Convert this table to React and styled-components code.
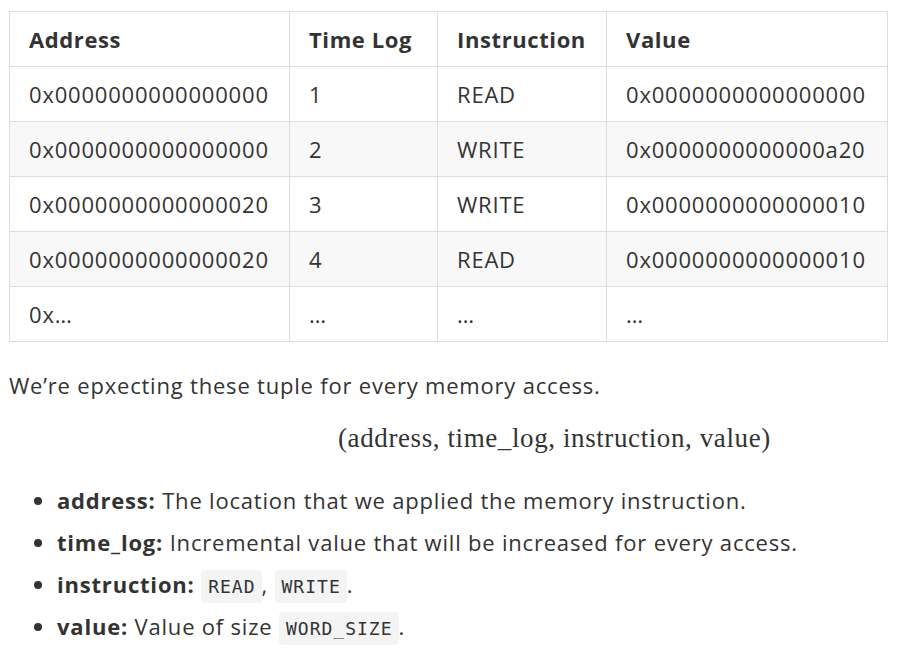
import React from "react";
import styled, { createGlobalStyle } from "styled-components";

const GlobalStyle = createGlobalStyle`
  body {
    margin: 0;
    background: #fff;
    color: #333;
    font-family: "Open Sans", "Noto Sans", sans-serif;
  }
`;

const Page = styled.div`
  padding: 11px 10px 0 9px;
  font-size: 22px;
  letter-spacing: 0.8px;
`;

const Table = styled.table`
  border-collapse: collapse;
  table-layout: fixed;
  width: 878px;
  font-size: 22px;
  letter-spacing: 0.8px;
  th, td {
    border: 1px solid #ddd;
    padding: 0 19px;
    height: 54px;
    text-align: left;
    white-space: nowrap;
  }
  th {
    font-weight: 700;
    letter-spacing: 0.6px;
  }
  tbody tr:nth-child(odd) {
    background: #fff;
  }
  tbody tr:nth-child(even) {
    background: #f8f8f8;
  }
`;

const Para = styled.p`
  margin: 28px 0 0;
  line-height: 30px;
`;

const MathLine = styled.div`
  margin-top: 23px;
  padding-left: 329px;
  font-family: "Liberation Serif", "DejaVu Serif", serif;
  font-size: 27px;
  letter-spacing: 0.6px;
  line-height: 30px;
`;

const List = styled.ul`
  margin: 32px 0 0;
  padding-left: 48px;
  li {
    line-height: 30px;
    height: 30px;
    margin-bottom: 12px;
  }
`;

const Code = styled.code`
  font-family: "DejaVu Sans Mono", "Liberation Mono", monospace;
  font-size: 18px;
  line-height: 1;
  letter-spacing: 1px;
  background: #f4f4f4;
  border-radius: 4px;
  padding: 6px 6px 6px 7px;
`;

const rows = [
  ["0x0000000000000000", "1", "READ", "0x0000000000000000"],
  ["0x0000000000000000", "2", "WRITE", "0x0000000000000a20"],
  ["0x0000000000000020", "3", "WRITE", "0x0000000000000010"],
  ["0x0000000000000020", "4", "READ", "0x0000000000000010"],
  ["0x…", "…", "…", "…"],
];

export default function App() {
  return (
    <Page>
      <GlobalStyle />
      <Table>
        <colgroup>
          <col style={{ width: 280 }} />
          <col style={{ width: 148 }} />
          <col style={{ width: 169 }} />
          <col style={{ width: 281 }} />
        </colgroup>
        <thead>
          <tr>
            <th>Address</th>
            <th>Time Log</th>
            <th>Instruction</th>
            <th>Value</th>
          </tr>
        </thead>
        <tbody>
          {rows.map((r, i) => (
            <tr key={i}>
              {r.map((c, j) => (
                <td key={j}>{c}</td>
              ))}
            </tr>
          ))}
        </tbody>
      </Table>
      <Para>We’re epxecting these tuple for every memory access.</Para>
      <MathLine>(address, time_log, instruction, value)</MathLine>
      <List>
        <li>
          <strong>address:</strong> The location that we applied the memory instruction.
        </li>
        <li>
          <strong>time_log:</strong> Incremental value that will be increased for every access.
        </li>
        <li>
          <strong>instruction:</strong> <Code>READ</Code>, <Code>WRITE</Code>.
        </li>
        <li>
          <strong>value:</strong> Value of size <Code>WORD_SIZE</Code>.
        </li>
      </List>
    </Page>
  );
}
